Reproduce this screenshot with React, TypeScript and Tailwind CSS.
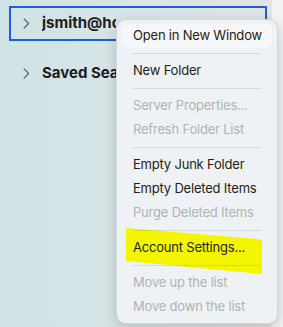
import React from "react";

type Item = { label: string; disabled?: boolean } | "sep";

const items: Item[] = [
  { label: "Open in New Window" },
  "sep",
  { label: "New Folder" },
  "sep",
  { label: "Server Properties...", disabled: true },
  { label: "Refresh Folder List", disabled: true },
  "sep",
  { label: "Empty Junk Folder" },
  { label: "Empty Deleted Items" },
  { label: "Purge Deleted Items", disabled: true },
  "sep",
  { label: "Account Settings..." },
  "sep",
  { label: "Move up the list", disabled: true },
  { label: "Move down the list", disabled: true },
];

function Chevron() {
  return (
    <svg width="7" height="11" viewBox="0 0 7 11" className="shrink-0">
      <path d="M1.2 1 L5.6 5.5 L1.2 10" fill="none" stroke="#6f7173" strokeWidth="1.5" strokeLinecap="round" strokeLinejoin="round" />
    </svg>
  );
}

export default function App() {
  return (
    <div
      className="relative w-[283px] h-[327px] flex overflow-hidden"
      style={{ fontFamily: "Inter, 'Liberation Sans', sans-serif" }}
    >
      {/* sidebar */}
      <div className="w-[272px] h-full bg-gradient-to-r from-[#cfe3e5] via-[#d9e5e7] to-[#e3e4e6] flex flex-col">
        <div className="mt-[6px] ml-[9px] w-[258px] h-[35px] border-2 border-[#1b5fd9] flex items-center pl-[12px] gap-[12px]">
          <Chevron />
          {/* cut off where the menu covers it */}
          <span className="w-[74px] overflow-hidden text-[15px] font-bold text-[#1b1c1e] whitespace-nowrap">jsmith@hotmail.com</span>
        </div>
        <div className="mt-[15px] ml-[9px] w-[258px] h-[35px] flex items-center pl-[14px] gap-[12px]">
          <Chevron />
          <span className="w-[74px] overflow-hidden text-[15px] font-bold text-[#1b1c1e] whitespace-nowrap">Saved Searches</span>
        </div>
      </div>
      <div className="flex-1 h-full bg-[#f2f3f4]" />

      {/* context menu */}
      <div className="absolute left-[116px] top-[19px] w-[162px] rounded-[10px] bg-[#eef2f4] border border-[#d3d7da] shadow-[0_4px_14px_rgba(0,0,0,0.18)] py-[4px] px-[5px]">
        <svg
          className="absolute inset-0 pointer-events-none"
          width="162"
          height="303"
          viewBox="0 0 162 303"
        >
          <polygon points="9,208 140,219 145,220 145,254 9,241" fill="#f3f600" />
        </svg>
        <div className="relative flex flex-col">
          {items.map((it, i) =>
            it === "sep" ? (
              <div key={i} className="h-[11px] flex items-center px-[11px]">
                <div className="h-px w-full bg-black/10" />
              </div>
            ) : (
              <div
                key={i}
                className={
                  "h-[24px] flex items-center px-[11px] text-[13px] tracking-[-0.2px] whitespace-nowrap rounded-[6px] " +
                  (it.disabled ? "text-[#afb3b6]" : "text-[#1d1e20]") +
                  (i === 0 ? " bg-white/40" : "")
                }
              >
                {it.label}
              </div>
            )
          )}
        </div>
      </div>
    </div>
  );
}
